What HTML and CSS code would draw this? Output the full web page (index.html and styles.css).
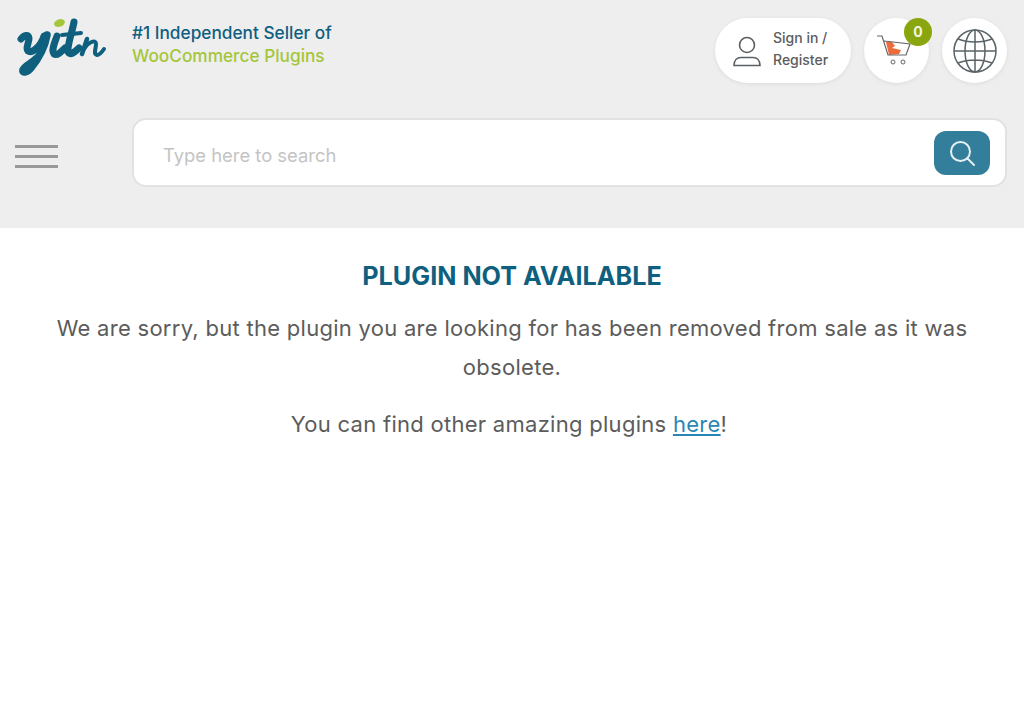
FILE: index.html
```html
<!DOCTYPE html>
<html lang="en">
<head>
  <meta charset="UTF-8" />
  <meta name="viewport" content="width=device-width, initial-scale=1.0"/>
  <title>Plugin not available</title>
  <link rel="stylesheet" href="styles.css">
</head>
<body>

<header class="site-header">
  <div class="top-row">
    <a class="logo" href="#">
      <svg width="90" height="60" viewBox="0 0 90 60" fill="none" stroke="#0f5f7f" stroke-linecap="round" stroke-linejoin="round">
        <ellipse cx="42.5" cy="5" rx="5.5" ry="3.8" fill="#a5c63b" stroke="none" transform="rotate(-20 42.5 5)"/>
        <path d="M4 21C7 17 12 16 12 20C12 26 8 30 11 33C15 36 24 28 27 18" stroke-width="7"/>
        <path d="M30 17C28 28 22 40 14 50C10 55 5 55 6 52C7 48 14 46 20 40" stroke-width="7.5"/>
        <path d="M40 18C38 24 34 32 37 36C40 38 44 34 48 30" stroke-width="7"/>
        <path d="M57 4C55 15 50 28 51 34C53 38 58 34 62 30" stroke-width="7"/>
        <path d="M45 17L64 15" stroke-width="4"/>
        <path d="M70 21L65 36" stroke-width="4.5"/>
        <path d="M67 31C71 24 79 21 79 26C79 31 76 36 80 37C83 37 85 34 87 31" stroke-width="4"/>
      </svg>
    </a>
    <div class="tagline">
      <span class="tagline-blue">#1 Independent Seller of</span>
      <span class="tagline-green">WooCommerce Plugins</span>
    </div>
    <div class="actions">
      <a class="pill" href="#">
        <svg width="32" height="32" viewBox="0 0 32 32" fill="none" stroke="#5a5f63" stroke-width="1.6">
          <circle cx="16" cy="10" r="7.5"/>
          <path d="M3 30.5c0-5 3-8 7-8h12c4 0 7 3 7 8z"/>
        </svg>
        <span class="pill-text">Sign in /<br>Register</span>
      </a>
      <a class="round cart" href="#">
        <svg width="36" height="32" viewBox="0 0 36 32" fill="none">
          <path d="M10 7L16 7L19 11L16 13L25 15L23 19L13 20Z" fill="#ee6c3b"/>
          <path d="M1 1h5l6 19h18l4-11L8 6" stroke="#666" stroke-width="1.2"/>
          <circle cx="17" cy="27" r="2" stroke="#666"/>
          <circle cx="27" cy="27" r="2" stroke="#666"/>
        </svg>
        <span class="badge">0</span>
      </a>
      <a class="round" href="#">
        <svg width="44" height="44" viewBox="0 0 44 44" fill="none" stroke="#5a6368" stroke-width="1.5">
          <circle cx="22" cy="22" r="21"/>
          <ellipse cx="22" cy="22" rx="10" ry="21"/>
          <path d="M22 1v42M1 22h42M5 10c10 4 24 4 34 0M5 34c10-4 24-4 34 0"/>
        </svg>
      </a>
    </div>
  </div>
  <div class="search-row">
    <button class="burger" aria-label="Menu"><i></i><i></i><i></i></button>
    <form class="search">
      <input type="text" placeholder="Type here to search">
      <button type="button" class="search-btn" aria-label="Search">
        <svg width="28" height="28" viewBox="0 0 28 28" fill="none" stroke="#e6f0f3" stroke-width="2">
          <circle cx="12.5" cy="12.5" r="9.5"/>
          <path d="M19.5 19.5l6.5 6.5" stroke-linecap="round"/>
        </svg>
      </button>
    </form>
  </div>
</header>

<section class="notice">
  <h1>PLUGIN NOT AVAILABLE</h1>
  <p>We are sorry, but the plugin you are looking for has been removed from sale as it was obsolete.</p>
  <p class="more">You can find other amazing plugins <a href="#">here</a>!</p>
</section>

</body>
</html>
```

FILE: styles.css
```css
* {
  box-sizing: border-box;
}
body {
  margin: 0;
  font-family: Inter, 'Liberation Sans', sans-serif;
  background: #fff;
  color: #5c5c5c;
}
.site-header {
  background: #eee;
  height: 228px;
  padding: 18px 17px 0 15px;
}
.top-row {
  display: flex;
  align-items: flex-start;
}
.logo {
  width: 117px;
  flex-shrink: 0;
  padding-left: 2px;
}
.tagline {
  display: flex;
  flex-direction: column;
  gap: 4px;
  padding-top: 5px;
  font-size: 17.25px;
  font-weight: 500;
  line-height: 19px;
}
.tagline-blue {
  color: #0f5f7f;
}
.tagline-green {
  color: #a5c63b;
}
.actions {
  display: flex;
  gap: 13px;
  margin-left: auto;
}
.pill, .round {
  background: #fff;
  height: 65px;
  border-radius: 33px;
  box-shadow: 0 1px 4px rgba(0,0,0,0.08);
  display: flex;
  align-items: center;
  text-decoration: none;
}
.pill {
  width: 136px;
  padding-left: 16px;
  gap: 10px;
  color: #5c5c5c;
  font-size: 14px;
  font-weight: 500;
  line-height: 22px;
}
.pill-text {
  padding-bottom: 4px;
}
.round {
  width: 65px;
  justify-content: center;
  position: relative;
}
.cart svg {
  margin-right: 6px;
}
.badge {
  position: absolute;
  top: 0;
  right: -3px;
  width: 28px;
  height: 28px;
  border-radius: 50%;
  background: #8aa60f;
  color: #f3f3e0;
  font-size: 14px;
  font-weight: 700;
  text-align: center;
  line-height: 28px;
}
.search-row {
  display: flex;
  align-items: center;
  margin-top: 35px;
}
.burger {
  width: 117px;
  flex-shrink: 0;
  background: none;
  border: none;
  padding: 8px 0 0;
  display: flex;
  flex-direction: column;
  gap: 7px;
}
.burger i {
  display: block;
  width: 43px;
  height: 3px;
  background: #999;
}
.search {
  flex: 1;
  height: 69px;
  background: #fff;
  border: 2px solid #e2e2e2;
  border-radius: 14px;
  display: flex;
  align-items: center;
  padding: 0 15px 0 29px;
}
.search input {
  flex: 1;
  border: none;
  outline: none;
  background: none;
  padding: 4px 0 0;
  font-family: inherit;
  font-size: 18.4px;
  color: #5c5c5c;
}
.search input::placeholder {
  color: #c4c4c4;
}
.search-btn {
  width: 56px;
  height: 44px;
  background: #337e9b;
  border: none;
  border-radius: 12px;
  display: flex;
  align-items: center;
  justify-content: center;
}
.notice {
  padding: 30px 40px 0;
  text-align: center;
}
.notice h1 {
  margin: 0 0 15px;
  color: #0f5f7f;
  font-size: 25.2px;
  font-weight: 700;
  line-height: 36px;
}
.notice p {
  margin: 0 0 18px;
  font-size: 22px;
  letter-spacing: 0.28px;
  line-height: 39px;
}
.notice .more {
  padding-right: 6px;
}
.notice a {
  color: #2a86b5;
}
```
